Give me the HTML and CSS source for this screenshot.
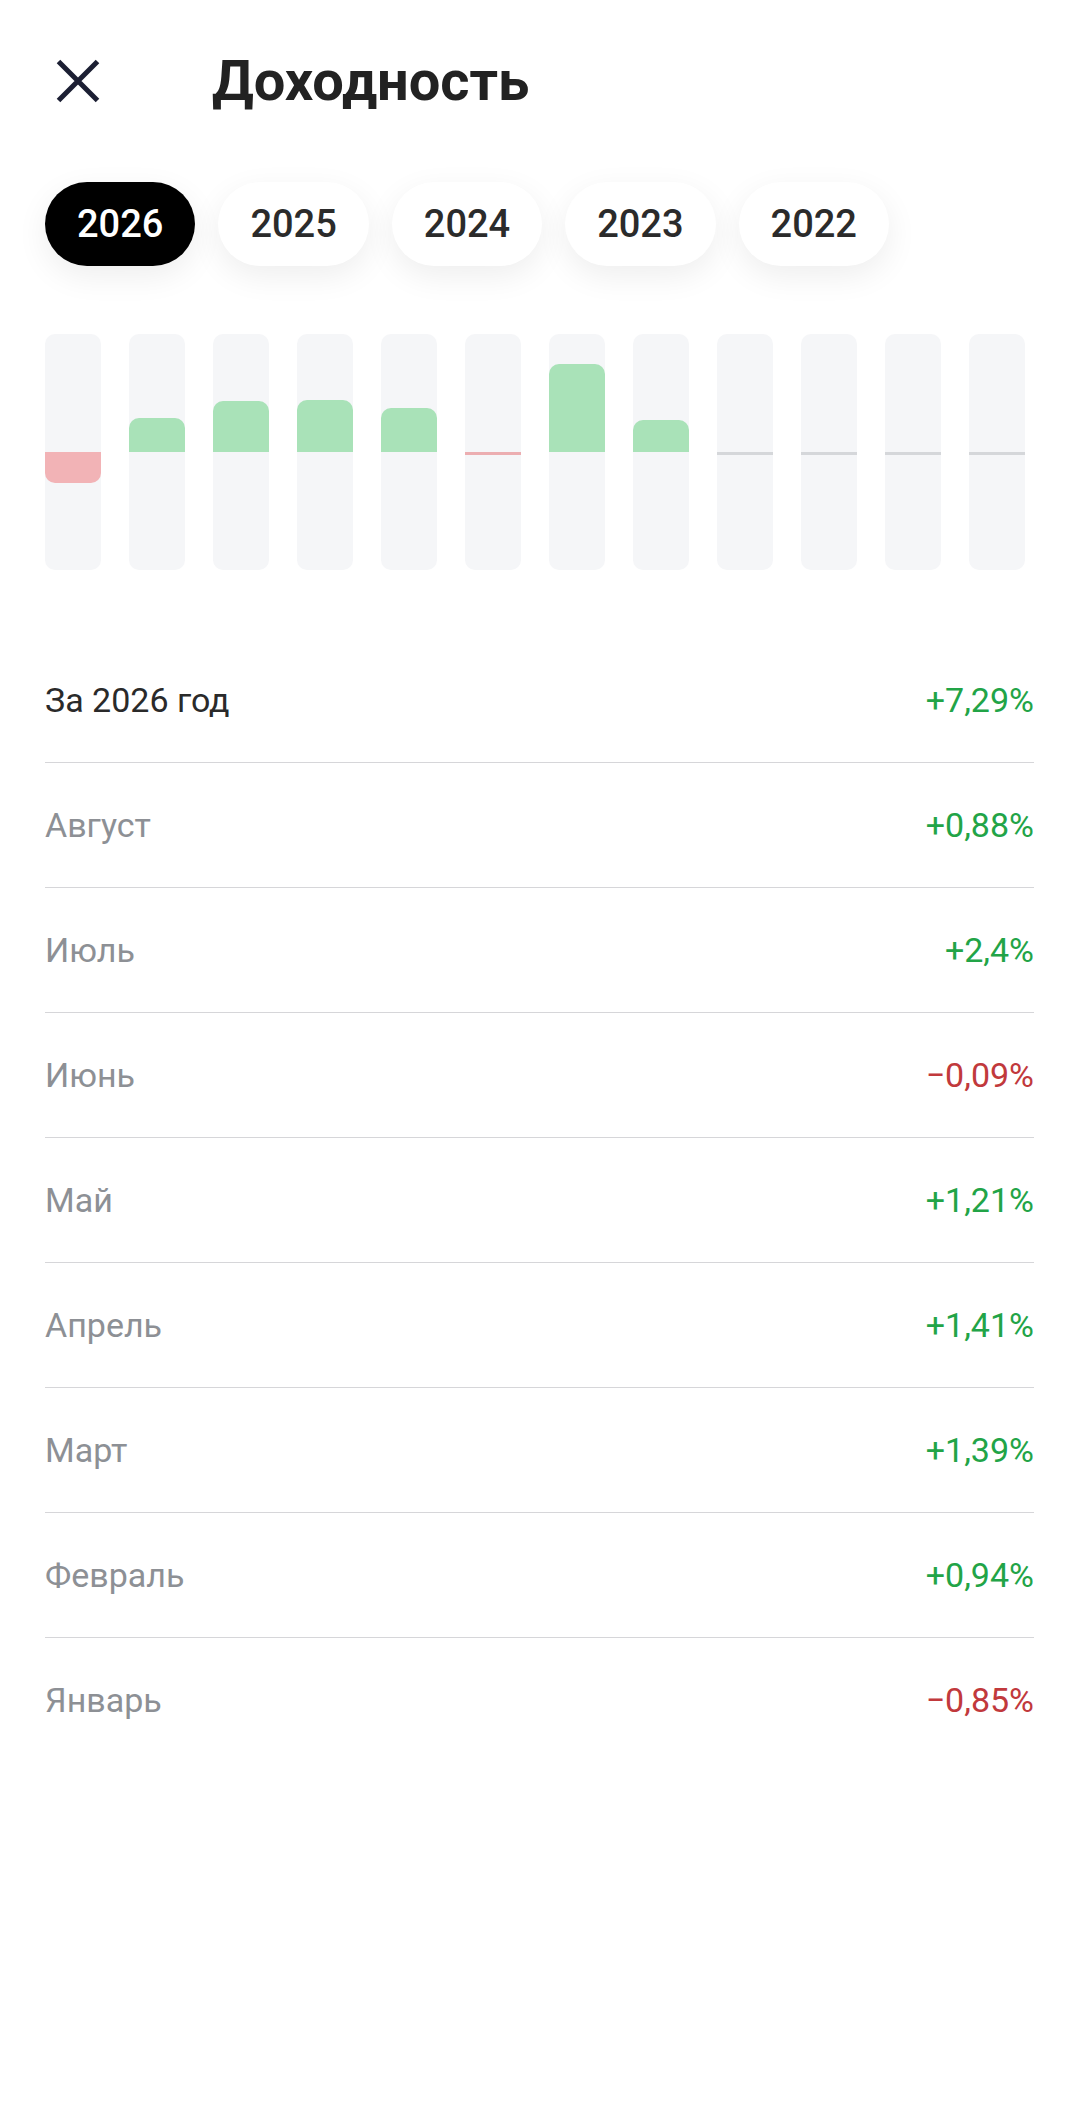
FILE: index.html
```html
<!DOCTYPE html>
<html lang="ru">
<head>
    <meta charset="UTF-8">
    <meta name="viewport" content="width=device-width, initial-scale=1.0">
    <title>Доходность</title>
    <link rel="stylesheet" href="styles.css">
</head>
<body>
    <div class="page">
        <header class="header">
            <button class="close-btn" aria-label="Закрыть">
                <svg width="48" height="48" viewBox="0 0 48 48">
                    <path d="M4.5 4.5 L43.5 43.5 M43.5 4.5 L4.5 43.5" stroke="#1c1f33" stroke-width="5" fill="none"/>
                </svg>
            </button>
            <h1>Доходность</h1>
        </header>

        <div class="years">
            <button class="year-chip active">2026</button>
            <button class="year-chip">2025</button>
            <button class="year-chip">2024</button>
            <button class="year-chip">2023</button>
            <button class="year-chip">2022</button>
        </div>

        <div class="chart">
            <div class="track">
                <div class="half up"></div>
                <div class="half down"><div class="bar neg" style="height: 31px"></div></div>
            </div>
            <div class="track">
                <div class="half up"><div class="bar pos" style="height: 34px"></div></div>
                <div class="half down"></div>
            </div>
            <div class="track">
                <div class="half up"><div class="bar pos" style="height: 51px"></div></div>
                <div class="half down"></div>
            </div>
            <div class="track">
                <div class="half up"><div class="bar pos" style="height: 52px"></div></div>
                <div class="half down"></div>
            </div>
            <div class="track">
                <div class="half up"><div class="bar pos" style="height: 44px"></div></div>
                <div class="half down"></div>
            </div>
            <div class="track">
                <div class="half up"></div>
                <div class="half down"><div class="bar neg flat" style="height: 3px"></div></div>
            </div>
            <div class="track">
                <div class="half up"><div class="bar pos" style="height: 88px"></div></div>
                <div class="half down"></div>
            </div>
            <div class="track">
                <div class="half up"><div class="bar pos" style="height: 32px"></div></div>
                <div class="half down"></div>
            </div>
            <div class="track">
                <div class="half up"></div>
                <div class="half down"><div class="bar empty"></div></div>
            </div>
            <div class="track">
                <div class="half up"></div>
                <div class="half down"><div class="bar empty"></div></div>
            </div>
            <div class="track">
                <div class="half up"></div>
                <div class="half down"><div class="bar empty"></div></div>
            </div>
            <div class="track">
                <div class="half up"></div>
                <div class="half down"><div class="bar empty"></div></div>
            </div>
        </div>

        <ul class="returns">
            <li class="row total"><span class="label">За 2026 год</span><span class="value up">+7,29%</span></li>
            <li class="row"><span class="label">Август</span><span class="value up">+0,88%</span></li>
            <li class="row"><span class="label">Июль</span><span class="value up">+2,4%</span></li>
            <li class="row"><span class="label">Июнь</span><span class="value down">−0,09%</span></li>
            <li class="row"><span class="label">Май</span><span class="value up">+1,21%</span></li>
            <li class="row"><span class="label">Апрель</span><span class="value up">+1,41%</span></li>
            <li class="row"><span class="label">Март</span><span class="value up">+1,39%</span></li>
            <li class="row"><span class="label">Февраль</span><span class="value up">+0,94%</span></li>
            <li class="row"><span class="label">Январь</span><span class="value down">−0,85%</span></li>
        </ul>
    </div>
</body>
</html>
```

FILE: styles.css
```css
body {
    margin: 0;
    background: #ffffff;
    font-family: Roboto, "Noto Sans", sans-serif;
    color: #222222;
}

.page {
    padding: 0 46px 0 45px;
}

/* Header */
.header {
    height: 162px;
    display: flex;
    align-items: center;
    gap: 110px;
}

.close-btn {
    width: 48px;
    height: 48px;
    margin-left: 9px;
    padding: 0;
    border: none;
    background: none;
    display: flex;
}

.header h1 {
    margin: 0;
    font-size: 56px;
    line-height: 1;
    font-weight: 700;
    color: #222222;
}

/* Year chips */
.years {
    margin-top: 20px;
    display: flex;
    gap: 23px;
}

.year-chip {
    height: 84px;
    padding: 0 32px;
    border: none;
    border-radius: 42px;
    background: #ffffff;
    color: #2b2b2b;
    font-family: Roboto, sans-serif;
    font-size: 38px;
    font-weight: 500;
    box-shadow: 0 10px 32px rgba(0, 0, 0, 0.07);
}

.year-chip.active {
    background: #000000;
    color: #ffffff;
}

/* Chart */
.chart {
    margin-top: 68px;
    display: grid;
    grid-template-columns: repeat(12, 56px);
    column-gap: 28px;
}

.track {
    height: 236px;
    background: #f5f6f8;
    border-radius: 10px;
    overflow: hidden;
    display: flex;
    flex-direction: column;
}

.half {
    height: 118px;
    display: flex;
    flex-direction: column;
}

.half.up {
    justify-content: flex-end;
}

.bar.pos {
    background: #a9e2b8;
    border-radius: 10px 10px 0 0;
}

.bar.neg {
    background: #f2b3b6;
    border-radius: 0 0 10px 10px;
}

.bar.neg.flat {
    border-radius: 0;
    background: #ecaeb1;
}

.bar.empty {
    height: 3px;
    background: #d5d7da;
}

/* Returns list */
.returns {
    list-style: none;
    margin: 68px 0 0;
    padding: 0;
}

.row {
    height: 124px;
    display: flex;
    align-items: center;
    justify-content: space-between;
    border-bottom: 1px solid #d6d6d9;
    font-size: 34px;
}

.row:last-child {
    border-bottom: none;
}

.label {
    color: #8d9095;
}

.row.total .label {
    color: #2a2a2a;
}

.value.up {
    color: #22a447;
}

.value.down {
    color: #c1393c;
}
```
